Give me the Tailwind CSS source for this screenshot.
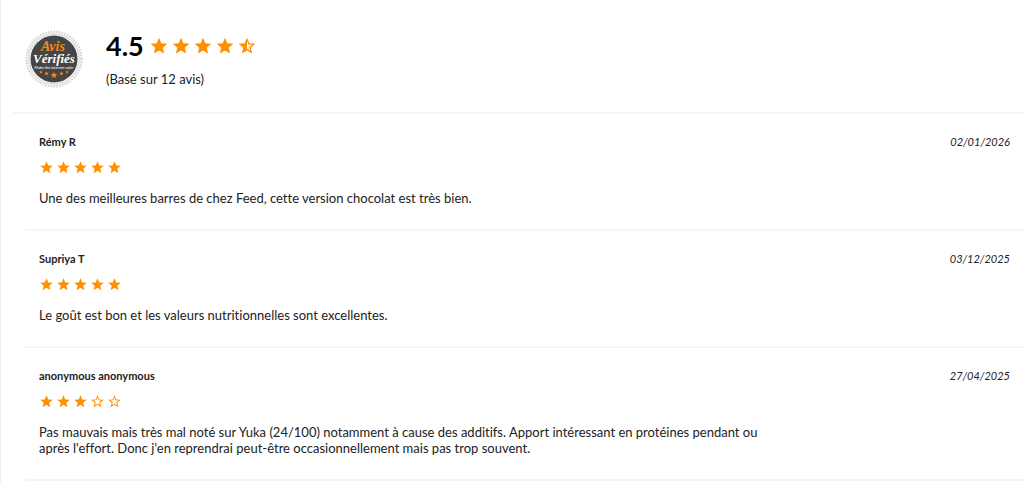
<!DOCTYPE html>
<html lang="fr">

<head>
    <meta charset="UTF-8">
    <meta name="viewport" content="width=device-width, initial-scale=1.0">
    <title>Avis clients</title>
    <script src="https://cdn.jsdelivr.net/npm/@tailwindcss/browser@4"></script>
</head>

<body class="bg-white font-['Lato',sans-serif] text-[#222] [font-variant-ligatures:none]">
    <!-- Star symbols -->
    <svg class="hidden" aria-hidden="true">
        <symbol id="star" viewBox="0 0 24 24">
            <path d="M12 17.27 18.18 21l-1.64-7.03L22 9.24l-7.19-.61L12 2 9.19 8.63 2 9.24l5.46 4.73L5.82 21z" />
        </symbol>
        <symbol id="star-half" viewBox="0 0 24 24">
            <path d="m22 9.24-7.19-.62L12 2 9.19 8.63 2 9.24l5.46 4.73L5.82 21 12 17.27 18.18 21l-1.63-7.03L22 9.24zM12 15.4V6.1l1.71 4.04 4.38.38-3.32 2.88 1 4.28L12 15.4z" />
        </symbol>
        <symbol id="star-empty" viewBox="0 0 24 24">
            <path d="m22 9.24-7.19-.62L12 2 9.19 8.63 2 9.24l5.46 4.73L5.82 21 12 17.27 18.18 21l-1.63-7.03L22 9.24zM12 15.4l-3.76 2.27 1-4.28-3.32-2.88 4.38-.38L12 6.1l1.71 4.04 4.38.38-3.32 2.88 1 4.28L12 15.4z" />
        </symbol>
    </svg>

    <main class="min-h-screen border-l border-[#ececec] pl-3">
        <header class="flex items-start border-b-2 border-[#f5f5f5] pt-7 pb-5 pl-3">
            <svg class="size-16 shrink-0" viewBox="0 0 64 64" role="img" aria-label="Avis Vérifiés">
                <circle cx="29" cy="31" r="27" fill="#f1f1f1" />
                <circle cx="29" cy="31" r="27.5" fill="none" stroke="#cfcfcf" stroke-width="2" stroke-dasharray="1.4 1.4" />
                <circle cx="29" cy="31" r="25" fill="#fafafa" stroke="#d5d5d5" />
                <circle cx="29" cy="31" r="23.5" fill="#454545" />
                <g font-style="italic" font-weight="bold" text-anchor="middle">
                    <text x="28" y="23" font-family="Liberation Serif, serif" font-size="14" fill="#f28a1c">Avis</text>
                    <text x="29" y="35" font-family="Liberation Serif, serif" font-size="13" fill="#fff">Vérifiés</text>
                    <text x="29" y="41" font-family="Lato, sans-serif" font-size="4" fill="#ddd">Make the internet safer</text>
                </g>
                <g fill="#f28a1c">
                    <use href="#star" x="14" y="42" width="4" height="4" />
                    <use href="#star" x="19" y="43" width="5" height="5" />
                    <use href="#star" x="25" y="43" width="8" height="8" />
                    <use href="#star" x="34" y="43" width="5" height="5" />
                    <use href="#star" x="40" y="42" width="4" height="4" />
                </g>
            </svg>
            <div class="pl-[17px]">
                <div class="flex items-center gap-[5px]">
                    <strong class="text-[27px] leading-9 font-bold text-black">4.5</strong>
                    <div class="flex gap-[2px] text-[#ff9100]" role="img" aria-label="4,5 sur 5">
                        <svg class="size-5 fill-current"><use href="#star" /></svg>
                        <svg class="size-5 fill-current"><use href="#star" /></svg>
                        <svg class="size-5 fill-current"><use href="#star" /></svg>
                        <svg class="size-5 fill-current"><use href="#star" /></svg>
                        <svg class="size-5 fill-current"><use href="#star-half" /></svg>
                    </div>
                </div>
                <p class="pt-[7px] text-[13px] leading-4">(Basé sur 12 avis)</p>
            </div>
        </header>

        <section class="pl-3">
            <article class="border-b-2 border-[#f5f5f5] px-[14px] pt-5 pb-[23px]">
                <div class="flex justify-between text-[11px] leading-4">
                    <h3 class="font-bold">Rémy R</h3>
                    <time class="italic" datetime="2026-01-02">02/01/2026</time>
                </div>
                <div class="flex gap-[2px] pt-[10px] text-[#ff9100]" role="img" aria-label="5 sur 5">
                    <svg class="size-[15px] fill-current"><use href="#star" /></svg>
                    <svg class="size-[15px] fill-current"><use href="#star" /></svg>
                    <svg class="size-[15px] fill-current"><use href="#star" /></svg>
                    <svg class="size-[15px] fill-current"><use href="#star" /></svg>
                    <svg class="size-[15px] fill-current"><use href="#star" /></svg>
                </div>
                <p class="max-w-[730px] pt-[15px] text-[13px] leading-4">Une des meilleures barres de chez Feed, cette version chocolat est très bien.</p>
            </article>

            <article class="border-b-2 border-[#f5f5f5] px-[14px] pt-5 pb-[23px]">
                <div class="flex justify-between text-[11px] leading-4">
                    <h3 class="font-bold">Supriya T</h3>
                    <time class="italic" datetime="2025-12-03">03/12/2025</time>
                </div>
                <div class="flex gap-[2px] pt-[10px] text-[#ff9100]" role="img" aria-label="5 sur 5">
                    <svg class="size-[15px] fill-current"><use href="#star" /></svg>
                    <svg class="size-[15px] fill-current"><use href="#star" /></svg>
                    <svg class="size-[15px] fill-current"><use href="#star" /></svg>
                    <svg class="size-[15px] fill-current"><use href="#star" /></svg>
                    <svg class="size-[15px] fill-current"><use href="#star" /></svg>
                </div>
                <p class="max-w-[730px] pt-[15px] text-[13px] leading-4">Le goût est bon et les valeurs nutritionnelles sont excellentes.</p>
            </article>

            <article class="border-b-2 border-[#f5f5f5] px-[14px] pt-5 pb-[23px]">
                <div class="flex justify-between text-[11px] leading-4">
                    <h3 class="font-bold">anonymous anonymous</h3>
                    <time class="italic" datetime="2025-04-27">27/04/2025</time>
                </div>
                <div class="flex gap-[2px] pt-[10px] text-[#ff9100]" role="img" aria-label="3 sur 5">
                    <svg class="size-[15px] fill-current"><use href="#star" /></svg>
                    <svg class="size-[15px] fill-current"><use href="#star" /></svg>
                    <svg class="size-[15px] fill-current"><use href="#star" /></svg>
                    <svg class="size-[15px] fill-current"><use href="#star-empty" /></svg>
                    <svg class="size-[15px] fill-current"><use href="#star-empty" /></svg>
                </div>
                <p class="max-w-[730px] pt-[15px] text-[13px] leading-4">Pas mauvais mais très mal noté sur Yuka (24/100) notamment à cause des additifs. Apport intéressant en protéines pendant ou après l'effort. Donc j'en reprendrai peut-être occasionnellement mais pas trop souvent.</p>
            </article>
        </section>
    </main>
</body>

</html>
